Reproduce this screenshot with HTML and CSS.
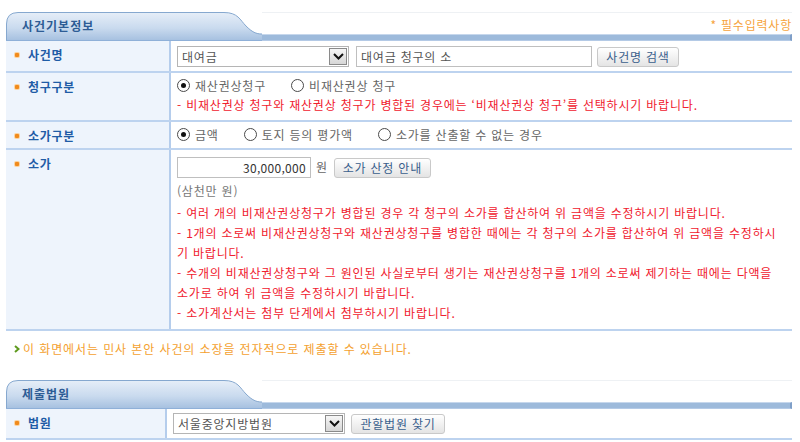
FILE: index.html
```html
<!DOCTYPE html>
<html lang="ko">
<head>
<meta charset="utf-8">
<title>사건기본정보</title>
<link rel="stylesheet" href="styles.css">
</head>
<body>
<div class="page">
  <div class="sec-head">
    <div class="tab">
      <svg class="tab-bg" width="256" height="29" viewBox="0 0 256 29">
        <defs>
          <linearGradient id="tg1" x1="0" y1="0" x2="0" y2="1">
            <stop offset="0" stop-color="#e6eef8"/>
            <stop offset="0.55" stop-color="#c9daee"/>
            <stop offset="1" stop-color="#a4bfdf"/>
          </linearGradient>
        </defs>
        <path d="M0.5,29 V12 Q0.5,0.5 12,0.5 H218 C232,0.5 234,8 240,14 C246,20 250,22 256,22 V29 Z" fill="url(#tg1)"/>
        <path d="M0.5,29 V12 Q0.5,0.5 12,0.5 H218 C232,0.5 234,8 240,14 C246,20 250,22 256,22" fill="none" stroke="#86a8cf" stroke-width="1"/>
        <rect x="0" y="28" width="256" height="1" fill="#8fb0d8"/>
      </svg>
      <span class="tab-title">사건기본정보</span>
    </div>
    <div class="head-right">
      <div class="head-top"><span class="req">* 필수입력사항</span></div>
      <div class="bar"></div>
    </div>
  </div>

  <div class="row r1">
    <div class="label"><i class="dot"></i>사건명</div>
    <div class="content c1">
      <div class="select">
        <span>대여금</span>
        <span class="arrow"><svg width="11" height="7" viewBox="0 0 11 7"><polyline points="1,1 5.5,5.5 10,1" fill="none" stroke="#111" stroke-width="2"/></svg></span>
      </div>
      <div class="input wide">대여금 청구의 소</div>
      <div class="btn b-search">사건명 검색</div>
    </div>
  </div>

  <div class="row r2">
    <div class="label"><i class="dot"></i>청구구분</div>
    <div class="content c2">
      <div class="radios">
        <span class="radio on"></span><span class="rtext">재산권상청구</span>
        <span class="radio"></span><span class="rtext">비재산권상 청구</span>
      </div>
      <p class="warn">- 비재산권상 청구와 재산권상 청구가 병합된 경우에는 ‘비재산권상 청구’를 선택하시기 바랍니다.</p>
    </div>
  </div>

  <div class="row r3">
    <div class="label"><i class="dot"></i>소가구분</div>
    <div class="content c2">
      <div class="radios">
        <span class="radio on"></span><span class="rtext">금액</span>
        <span class="radio"></span><span class="rtext">토지 등의 평가액</span>
        <span class="radio"></span><span class="rtext">소가를 산출할 수 없는 경우</span>
      </div>
    </div>
  </div>

  <div class="row r4">
    <div class="label"><i class="dot"></i>소가</div>
    <div class="content c4">
      <div class="money">
        <div class="input amount">30,000,000</div>
        <span class="won">원</span>
        <div class="btn b-guide">소가 산정 안내</div>
      </div>
      <p class="sub">(삼천만 원)</p>
      <div class="notes">
        <p class="warn">- 여러 개의 비재산권상청구가 병합된 경우 각 청구의 소가를 합산하여 위 금액을 수정하시기 바랍니다.</p>
        <p class="warn">- 1개의 소로써 비재산권상청구와 재산권상청구를 병합한 때에는 각 청구의 소가를 합산하여 위 금액을 수정하시<br>기 바랍니다.</p>
        <p class="warn">- 수개의 비재산권상청구와 그 원인된 사실로부터 생기는 재산권상청구를 1개의 소로써 제기하는 때에는 다액을<br>소가로 하여 위 금액을 수정하시기 바랍니다.</p>
        <p class="warn">- 소가계산서는 첨부 단계에서 첨부하시기 바랍니다.</p>
      </div>
    </div>
  </div>

  <p class="info"><svg class="garrow" width="6" height="8" viewBox="0 0 6 8"><polyline points="1,1 4.5,4 1,7" fill="none" stroke="#5e9a1e" stroke-width="2"/></svg>이 화면에서는 민사 본안 사건의 소장을 전자적으로 제출할 수 있습니다.</p>

  <div class="sec-head sec2">
    <div class="tab">
      <svg class="tab-bg" width="256" height="29" viewBox="0 0 256 29">
        <defs>
          <linearGradient id="tg2" x1="0" y1="0" x2="0" y2="1">
            <stop offset="0" stop-color="#e6eef8"/>
            <stop offset="0.55" stop-color="#c9daee"/>
            <stop offset="1" stop-color="#a4bfdf"/>
          </linearGradient>
        </defs>
        <path d="M0.5,29 V12 Q0.5,0.5 12,0.5 H218 C232,0.5 234,8 240,14 C246,20 250,22 256,22 V29 Z" fill="url(#tg2)"/>
        <path d="M0.5,29 V12 Q0.5,0.5 12,0.5 H218 C232,0.5 234,8 240,14 C246,20 250,22 256,22" fill="none" stroke="#86a8cf" stroke-width="1"/>
        <rect x="0" y="28" width="256" height="1" fill="#8fb0d8"/>
      </svg>
      <span class="tab-title">제출법원</span>
    </div>
    <div class="head-right">
      <div class="head-top"></div>
      <div class="bar"></div>
    </div>
  </div>

  <div class="row r5">
    <div class="label"><i class="dot"></i>법원</div>
    <div class="content c5">
      <div class="select">
        <span>서울중앙지방법원</span>
        <span class="arrow"><svg width="11" height="7" viewBox="0 0 11 7"><polyline points="1,1 5.5,5.5 10,1" fill="none" stroke="#111" stroke-width="2"/></svg></span>
      </div>
      <div class="btn b-court">관할법원 찾기</div>
    </div>
  </div>
</div>
</body>
</html>
```

FILE: styles.css
```css
* { box-sizing: border-box; }

body {
  margin: 0;
  background: #ffffff;
  font-family: "Noto Sans CJK KR", "Noto Sans", sans-serif;
  font-size: 12px;
  color: #555555;
}

p { margin: 0; }

.page {
  width: 800px;
  padding: 0 8px 0 6px;
}

/* section header */
.sec-head {
  display: flex;
  height: 41px;
}

.tab {
  flex: 0 0 256px;
  height: 29px;
  margin-top: 12px;
  position: relative;
}

.tab-bg {
  position: absolute;
  left: 0;
  top: 0;
}

.tab-title {
  position: relative;
  display: block;
  padding-left: 16px;
  line-height: 28px;
  font-weight: bold;
  color: #2d5c95;
  letter-spacing: 1px;
}

.head-right {
  flex: 1;
  display: flex;
  flex-direction: column;
}

.head-top {
  flex: 1;
  margin-top: 12px;
  border-top: 1px solid #eef1f4;
  display: flex;
  justify-content: flex-end;
  align-items: center;
  padding-top: 1px;
}

.req {
  color: #f6a33c;
  letter-spacing: 0.8px;
}

.bar {
  height: 7px;
  background: #9dbadb;
  border-top: 1px solid #c6d7ec;
  border-bottom: 1px solid #b4cae6;
  border-right: 2px solid #7f9fc8;
}

/* rows */
.row {
  display: grid;
  grid-template-columns: 165px 1fr;
  border-bottom: 2px solid #bdd3ef;
}

.label {
  background: #eef4fc;
  border-right: 2px solid #b5cdec;
  padding: 6px 0 0 9px;
  font-weight: bold;
  color: #1f5ca6;
  line-height: 16px;
  letter-spacing: 0.7px;
  display: flex;
  align-items: flex-start;
}

.dot {
  flex: none;
  width: 4px;
  height: 4px;
  margin: 6px 9px 0 0;
  background: #f08a1c;
  border-radius: 1px;
  box-shadow: 0 0 0 1px #fbd3a0;
}

.content {
  padding-left: 6px;
  letter-spacing: 0.8px;
}

.c1 {
  height: 30px;
  padding-top: 5px;
  display: flex;
  align-items: flex-start;
}

.select {
  width: 172px;
  height: 21px;
  border: 1px solid #b5b5b5;
  display: flex;
  align-items: center;
  justify-content: space-between;
  padding-left: 4px;
  color: #555;
  line-height: 19px;
}

.arrow {
  width: 18px;
  height: 17px;
  margin-right: 1px;
  border: 1px solid #8a8a8a;
  background: linear-gradient(#f6f6f6, #d6d6d6);
  display: flex;
  align-items: center;
  justify-content: center;
}

.input {
  height: 21px;
  border: 1px solid #bfbfbf;
  line-height: 19px;
  padding: 0 4px;
  color: #555;
}

.wide {
  width: 236px;
  margin-left: 7px;
}

.btn {
  height: 20px;
  margin-top: 1px;
  border: 1px solid #c9c9c9;
  border-radius: 3px;
  background: linear-gradient(#ffffff, #e4e4e4);
  color: #3a5f8c;
  text-align: center;
  line-height: 18px;
  letter-spacing: 0.8px;
}

.b-search {
  width: 82px;
  margin-left: 5px;
}

/* radios */
.c2 {
  padding-top: 2px;
  padding-bottom: 4px;
}

.r2 .c2 {
  padding-bottom: 5px;
}

.radios {
  display: flex;
  align-items: center;
  height: 20px;
}

.radio {
  flex: none;
  width: 13px;
  height: 13px;
  border: 1px solid #4a4a4a;
  border-radius: 50%;
  background: #fff;
  position: relative;
  margin-right: 5px;
}

.radio.on::after {
  content: "";
  position: absolute;
  left: 3px;
  top: 3px;
  width: 5px;
  height: 5px;
  border-radius: 50%;
  background: #111;
}

.rtext {
  color: #666;
  margin-right: 25px;
}

.warn {
  color: #f0202e;
  line-height: 20px;
  white-space: nowrap;
}

/* amount row */
.c4 {
  padding-top: 7px;
  padding-bottom: 6px;
}

.money {
  display: flex;
  align-items: flex-start;
  height: 21px;
}

.amount {
  width: 134px;
  text-align: right;
  color: #333;
  letter-spacing: 0.3px;
}

.won {
  margin-left: 5px;
  line-height: 20px;
  color: #666;
}

.b-guide {
  width: 97px;
  margin-left: 6px;
  margin-top: 1px;
}

.sub {
  margin-top: 3px;
  line-height: 20px;
  color: #777;
}

.notes {
  margin-top: 2px;
}

/* info line */
.info {
  margin-top: 8px;
  padding-left: 8px;
  line-height: 20px;
  color: #f4a12f;
  display: flex;
  align-items: center;
  letter-spacing: 0.9px;
}

.garrow {
  margin-right: 3px;
}

.sec2 {
  margin-top: 9px;
}

/* court row */
.r5 {
  grid-template-columns: 161px 1fr;
}

.c5 {
  height: 29px;
  padding-top: 4px;
  display: flex;
  align-items: flex-start;
}

.b-court {
  width: 94px;
  margin-left: 6px;
}
```
